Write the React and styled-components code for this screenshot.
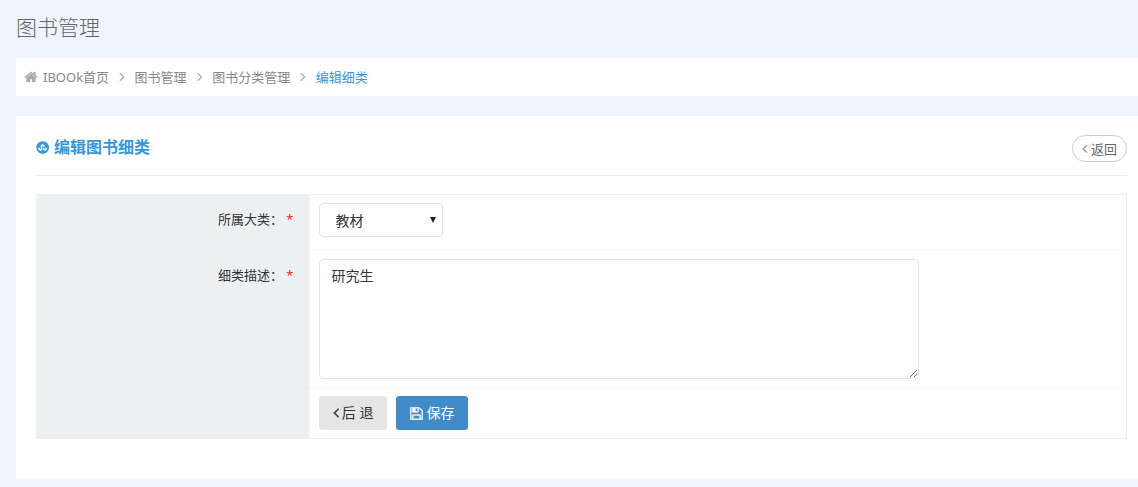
import React from "react";
import styled, { createGlobalStyle } from "styled-components";
import { FaStumbleuponCircle } from "react-icons/fa";

const GlobalStyle = createGlobalStyle`
  *, *::before, *::after { box-sizing: border-box; }
  body {
    margin: 0;
    background: #eff3fb;
    color: #333;
    font: 13px/20px "Noto Sans", "Noto Sans CJK SC", sans-serif;
  }
  button, select, textarea { font-family: inherit; }
`;

const ICONS = {
  home: {
    d: "M1472 992v480q0 26-19 45t-45 19h-384v-384h-256v384h-384q-26 0-45-19t-19-45v-480q0-1 .5-3t.5-3l575-474 575 474q1 2 1 6zm223-69l-62 74q-8 9-21 11h-3q-13 0-21-7l-692-577-692 577q-12 8-24 7-13-2-21-11l-62-74q-8-10-7-23.5t11-21.5l719-599q32-26 76-26t76 26l244 204v-195q0-14 9-23t23-9h192q14 0 23 9t9 23v408l219 182q10 8 11 21.5t-7 23.5z",
  },
  left: {
    d: "M1203 544q0 13-10 23l-393 393 393 393q10 10 10 23t-10 23l-50 50q-10 10-23 10t-23-10l-466-466q-10-10-10-23t10-23l466-466q10-10 23-10t23 10l50 50q10 10 10 23z",
    box: "544 64 704 1792",
  },
  right: {
    d: "M1171 960q0 13-10 23l-466 466q-10 10-23 10t-23-10l-50-50q-10-10-10-23t10-23l393-393-393-393q-10-10-10-23t10-23l50-50q10-10 23-10t23 10l466 466q10 10 10 23z",
    box: "500 64 704 1792",
  },
  save: {
    d: "M512 1536h768v-384h-768v384zm896 0h128v-896q0-14-10-38.5t-20-34.5l-281-281q-10-10-34-20t-39-10v416q0 40-28 68t-68 28h-576q-40 0-68-28t-28-68v-416h-128v1280h128v-416q0-40 28-68t68-28h832q40 0 68 28t28 68v416zm-384-928v-320q0-13-9.5-22.5t-22.5-9.5h-192q-13 0-22.5 9.5t-9.5 22.5v320q0 13 9.5 22.5t22.5 9.5h192q13 0 22.5-9.5t9.5-22.5zm640 32v928q0 40-28 68t-68 28h-1344q-40 0-68-28t-28-68v-1344q0-40 28-68t68-28h928q40 0 88 20t76 48l280 280q28 28 48 76t20 88z",
    box: "100 100 1592 1592",
  },
};

const Svg = styled.svg`
  display: block;
  flex: none;
  width: auto;
  height: ${(p) => p.$size}px;
  fill: currentColor;
  stroke: currentColor;
  stroke-width: 40;
`;

function Icon({ name, size }) {
  const { d, box = "0 0 1792 1792" } = ICONS[name];
  return (
    <Svg viewBox={box} $size={size} aria-hidden="true">
      <path d={d} />
    </Svg>
  );
}

const Page = styled.main`
  padding: 11px 0 8px 16px;
`;

const PageTitle = styled.h1`
  margin: 0 0 15px;
  color: #666;
  font-size: 21px;
  font-weight: 300;
  line-height: 32px;
`;

const Breadcrumb = styled.nav`
  display: flex;
  align-items: center;
  gap: 10px;
  height: 38px;
  margin-bottom: 20px;
  padding-left: 8px;
  background: #fff;
  color: #aaa;
`;

const Crumb = styled.a`
  display: flex;
  align-items: center;
  gap: 5px;
  color: ${(p) => (p.$active ? "#3598dc" : "#888")};
  text-decoration: none;
  svg { color: #aaa; }
`;

const Panel = styled.section`
  padding: 19px 11px 40px 20px;
  background: #fff;
`;

const PanelHeader = styled.header`
  display: flex;
  align-items: flex-start;
  justify-content: space-between;
  margin-bottom: 18px;
  padding-bottom: 13px;
  border-bottom: 1px solid #eee;
`;

const PanelTitle = styled.h2`
  display: flex;
  align-items: center;
  gap: 5px;
  margin: 0;
  color: #3598dc;
  font-size: 16px;
  font-weight: 700;
  line-height: 24px;
`;

const PillButton = styled.button`
  display: flex;
  align-items: center;
  gap: 3px;
  height: 27px;
  padding: 0 9px;
  border: 1px solid #ccc;
  border-radius: 14px;
  background: #fff;
  color: #666;
  font-size: 13px;
  line-height: 20px;
  svg { color: #999; }
`;

const Form = styled.form`
  border: 1px solid #eee;
  border-left: 0;
`;

const Row = styled.div`
  display: grid;
  grid-template-columns: 25% 1fr;
  background: #ecf0f1;
`;

const LabelCell = styled.div`
  padding: 14px 15px 0 0;
  text-align: right;
`;

const Required = styled.span`
  color: #ff2a1a;
`;

const ControlCell = styled.div`
  display: flex;
  gap: 9px;
  padding: ${(p) => (p.$tall ? "8px 9px 13px" : "8px 9px")};
  border-left: 1px dotted #eee;
  border-bottom: ${(p) => (p.$last ? "0" : "1px dotted #eee")};
  background: #fff;
`;

const SelectWrap = styled.div`
  position: relative;
  width: 124px;
`;

const Select = styled.select`
  appearance: none;
  display: block;
  width: 100%;
  height: 34px;
  padding: 0 16px;
  border: 1px solid #e5e5e5;
  border-radius: 4px;
  background: #fff;
  color: #333;
  font-size: 14px;
`;

const Arrow = styled.svg`
  position: absolute;
  top: 14px;
  right: 7px;
  width: 6px;
  height: 6px;
  fill: #222;
  pointer-events: none;
`;

const TextArea = styled.textarea`
  display: block;
  width: 600px;
  max-width: 100%;
  height: 120px;
  padding: 6px 12px;
  border: 1px solid #e5e5e5;
  border-radius: 4px;
  background: #fff;
  color: #333;
  font-size: 14px;
  line-height: 20px;
  resize: both;
`;

const Button = styled.button`
  display: flex;
  align-items: center;
  gap: 3px;
  height: 34px;
  padding: 0 14px;
  border: 0;
  border-radius: 3px;
  background: ${(p) => (p.$primary ? "#428bca" : "#e5e5e5")};
  color: ${(p) => (p.$primary ? "#fff" : "#333")};
  font-size: 14px;
  line-height: 20px;
`;

export default function App() {
  return (
    <>
      <GlobalStyle />
      <Page>
        <PageTitle>图书管理</PageTitle>
        <Breadcrumb>
          <Crumb href="#home"><Icon name="home" size={14} />IBOOk首页</Crumb>
          <Icon name="right" size={14} />
          <Crumb href="#books">图书管理</Crumb>
          <Icon name="right" size={14} />
          <Crumb href="#categories">图书分类管理</Crumb>
          <Icon name="right" size={14} />
          <Crumb href="#edit" $active>编辑细类</Crumb>
        </Breadcrumb>
        <Panel>
          <PanelHeader>
            <PanelTitle><FaStumbleuponCircle size={13} />编辑图书细类</PanelTitle>
            <PillButton type="button"><Icon name="left" size={14} />返回</PillButton>
          </PanelHeader>
          <Form>
            <Row>
              <LabelCell>
                <label htmlFor="category">所属大类： <Required>*</Required></label>
              </LabelCell>
              <ControlCell $tall>
                <SelectWrap>
                  <Select id="category"><option>教材</option></Select>
                  <Arrow viewBox="0 0 6 6" aria-hidden="true"><path d="M0 0h6L3 6z" /></Arrow>
                </SelectWrap>
              </ControlCell>
            </Row>
            <Row>
              <LabelCell>
                <label htmlFor="description">细类描述： <Required>*</Required></label>
              </LabelCell>
              <ControlCell>
                <TextArea id="description" defaultValue="研究生" />
              </ControlCell>
            </Row>
            <Row>
              <LabelCell />
              <ControlCell $last>
                <Button type="button"><Icon name="left" size={16} />后 退</Button>
                <Button type="submit" $primary><Icon name="save" size={13} />保存</Button>
              </ControlCell>
            </Row>
          </Form>
        </Panel>
      </Page>
    </>
  );
}
